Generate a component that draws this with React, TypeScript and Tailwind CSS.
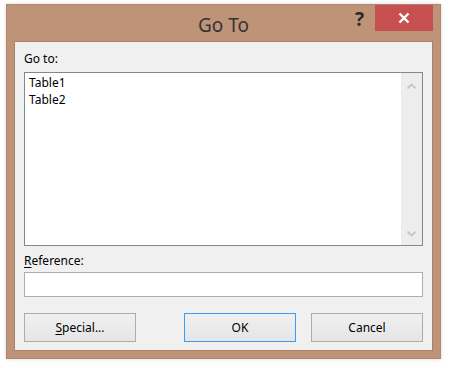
import type { ReactNode } from "react";

const font = { fontFamily: '"Noto Sans", "Segoe UI", sans-serif' };

function DialogButton({
  children,
  focused = false,
}: {
  children: ReactNode;
  focused?: boolean;
}) {
  return (
    <button
      className={`flex h-[29px] w-[112px] items-center justify-center border bg-gradient-to-b from-[#f0f0f0] to-[#e5e5e5] text-[12px] text-black ${
        focused ? "border-[#3c9cf0]" : "border-[#adadad]"
      }`}
    >
      {children}
    </button>
  );
}

function Chevron({ down = false }: { down?: boolean }) {
  return (
    <svg width="9" height="6" viewBox="0 0 9 6" className="block">
      <path
        d={down ? "M0.5 0.5 L4.5 4.5 L8.5 0.5" : "M0.5 5.5 L4.5 1.5 L8.5 5.5"}
        stroke="#c2c2c2"
        strokeWidth="1.6"
        fill="none"
      />
    </svg>
  );
}

export default function App() {
  return (
    <div className="h-[368px] w-[451px] bg-white pl-[6px] pt-[4px]" style={font}>
      <div className="flex h-[355px] w-[435px] flex-col border border-[#b0866c] bg-[#bf9378] px-[7px] pb-[7px] shadow-[0_0_4px_rgba(0,0,0,0.15)]">
        <div className="grid h-[36px] grid-cols-[1fr_auto_1fr]">
          <div />
          <div className="pt-[8px] text-[19px] leading-[24px] text-[#333333]">Go To</div>
          <div className="flex items-start justify-end">
            <span className="mr-[11px] pt-[3px] text-[19px] font-bold leading-[22px] text-[#2b2b2b]">?</span>
            <div className="flex h-[26px] w-[58px] items-center justify-center bg-[#c75050]">
              <svg width="12" height="12" viewBox="0 0 12 12">
                <path d="M1.5 1.5 L10.5 10.5 M10.5 1.5 L1.5 10.5" stroke="#ffffff" strokeWidth="2.4" />
              </svg>
            </div>
          </div>
        </div>

        <div className="flex flex-1 flex-col border border-[#a98068] bg-[#f0f0f0] px-[9px] text-[12px] text-black">
          <div className="pt-[9px] leading-[16px]">Go to:</div>
          <div className="mt-[5px] flex h-[174px] border border-[#828790] bg-white">
            <div className="flex-1 pl-[4px] pt-[1px] leading-[17px]">
              <div>Table1</div>
              <div>Table2</div>
            </div>
            <div className="flex w-[21px] flex-col items-center justify-between bg-[#ededed] pb-[8px] pt-[10px]">
              <Chevron />
              <Chevron down />
            </div>
          </div>

          <div className="mt-[7px] leading-[16px]">
            <span className="underline underline-offset-2">R</span>eference:
          </div>
          <div className="mt-[3px] h-[25px] border border-[#abadb3] bg-white" />

          <div className="mt-[16px] flex justify-between">
            <DialogButton>
              <span>
                <span className="underline underline-offset-2">S</span>pecial...
              </span>
            </DialogButton>
            <div className="flex gap-[15px]">
              <DialogButton focused>OK</DialogButton>
              <DialogButton>Cancel</DialogButton>
            </div>
          </div>
        </div>
      </div>
    </div>
  );
}
